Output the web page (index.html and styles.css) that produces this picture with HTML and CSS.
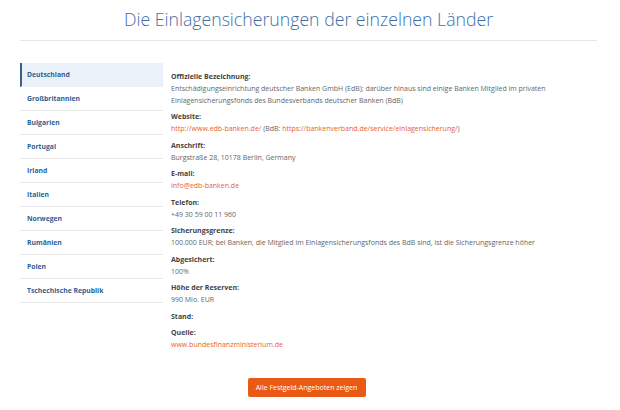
FILE: index.html
```html
<!DOCTYPE html>
<html lang="de">
<head>
    <meta charset="UTF-8">
    <meta name="viewport" content="width=device-width, initial-scale=1.0">
    <title>Einlagensicherung</title>
    <link rel="stylesheet" href="styles.css">
</head>
<body>
    <div id="container">
        <h1>Die Einlagensicherungen der einzelnen Länder</h1>

        <div class="tabs">
            <ul class="country-list">
                <li class="active">Deutschland</li>
                <li>Großbritannien</li>
                <li>Bulgarien</li>
                <li>Portugal</li>
                <li>Irland</li>
                <li>Italien</li>
                <li>Norwegen</li>
                <li>Rumänien</li>
                <li>Polen</li>
                <li>Tschechische Republik</li>
            </ul>

            <div class="details">
                <div class="item">
                    <div class="label">Offizielle Bezeichnung:</div>
                    <div class="value">Entschädigungseinrichtung deutscher Banken GmbH (EdB); darüber hinaus sind einige Banken Mitglied im privaten Einlagensicherungsfonds des Bundesverbands deutscher Banken (BdB)</div>
                </div>
                <div class="item">
                    <div class="label">Website:</div>
                    <div class="value"><a href="#">http://www.edb-banken.de/</a> (BdB: <a href="#">https://bankenverband.de/service/einlagensicherung/</a>)</div>
                </div>
                <div class="item">
                    <div class="label">Anschrift:</div>
                    <div class="value">Burgstraße 28, 10178 Berlin, Germany</div>
                </div>
                <div class="item">
                    <div class="label">E-mail:</div>
                    <div class="value"><a href="#">info@edb-banken.de</a></div>
                </div>
                <div class="item">
                    <div class="label">Telefon:</div>
                    <div class="value">+49 30 59 00 11 960</div>
                </div>
                <div class="item">
                    <div class="label">Sicherungsgrenze:</div>
                    <div class="value">100.000 EUR; bei Banken, die Mitglied im Einlagensicherungsfonds des BdB sind, ist die Sicherungsgrenze höher</div>
                </div>
                <div class="item">
                    <div class="label">Abgesichert:</div>
                    <div class="value">100%</div>
                </div>
                <div class="item">
                    <div class="label">Höhe der Reserven:</div>
                    <div class="value">990 Mio. EUR</div>
                </div>
                <div class="item">
                    <div class="label">Stand:</div>
                </div>
                <div class="item">
                    <div class="label">Quelle:</div>
                    <div class="value"><a href="#">www.bundesfinanzministerium.de</a></div>
                </div>
            </div>
        </div>

        <div class="actions">
            <button class="cta">Alle Festgeld-Angeboten zeigen</button>
        </div>
    </div>
</body>
</html>
```

FILE: styles.css
```css
body {
    font-family: "Open Sans", "Liberation Sans", sans-serif;
    background: #fff;
    margin: 0;
    color: #666;
}
#container {
    padding: 5px 23px 0 20px;
}
h1 {
    margin: 0;
    padding-bottom: 7px;
    border-bottom: 1px solid #e6e6e6;
    text-align: center;
    font-size: 17.7px;
    font-weight: 300;
    line-height: 28px;
    color: #3f6ea6;
}
.tabs {
    display: flex;
    margin-top: 22px;
}
.country-list {
    list-style: none;
    margin: 0;
    padding: 0;
    width: 143px;
    flex-shrink: 0;
}
.country-list li {
    height: 23px;
    line-height: 23px;
    padding-left: 7px;
    border-bottom: 1px solid #e8e8e8;
    font-size: 6.8px;
    font-weight: bold;
    color: #2f5f95;
}
.country-list li.active {
    background: #eaf1f9;
    border-left: 2px solid #3b5f88;
    padding-left: 5px;
    border-bottom-color: #eaf1f9;
}
.details {
    flex: 1;
    padding: 7.5px 0 0 8px;
}
.item { margin-bottom: 4.5px; }
.label {
    font-size: 7px;
    line-height: 12px;
    font-weight: bold;
    color: #444;
}
.value {
    font-size: 7px;
    line-height: 12px;
    color: #666;
}
.value a {
    color: #e8622a;
    text-decoration: none;
}
.actions {
    text-align: center;
    margin-top: 17px;
    padding-right: 4px;
}
.cta {
    background: #ea5a14;
    color: #fff;
    border: none;
    border-radius: 2px;
    height: 19px;
    width: 118px;
    padding: 0;
    font-family: inherit;
    font-size: 7px;
}
```
